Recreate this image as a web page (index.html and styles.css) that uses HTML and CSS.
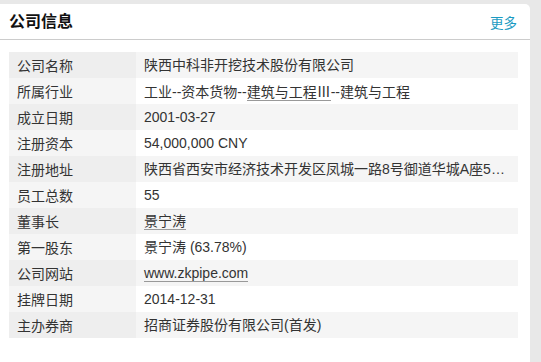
FILE: index.html
```html
<!DOCTYPE html>
<html lang="zh-CN">
<head>
<meta charset="utf-8">
<title>公司信息</title>
<link rel="stylesheet" href="styles.css">
</head>
<body>
<section class="card">
  <header class="card-head">
    <h2 class="card-title">公司信息</h2>
    <a class="more" href="#">更多</a>
  </header>
  <div class="info">
    <div class="row"><div class="label">公司名称</div><div class="value">陕西中科非开挖技术股份有限公司</div></div>
    <div class="row"><div class="label">所属行业</div><div class="value">工业--资本货物--<span class="link">建筑与工程<span class="cjk">Ⅲ</span></span>--建筑与工程</div></div>
    <div class="row"><div class="label">成立日期</div><div class="value">2001-03-27</div></div>
    <div class="row"><div class="label">注册资本</div><div class="value">54,000,000 CNY</div></div>
    <div class="row"><div class="label">注册地址</div><div class="value">陕西省西安市经济技术开发区凤城一路8号御道华城A座5层501室</div></div>
    <div class="row"><div class="label">员工总数</div><div class="value">55</div></div>
    <div class="row"><div class="label">董事长</div><div class="value"><span class="link">景宁涛</span></div></div>
    <div class="row"><div class="label">第一股东</div><div class="value">景宁涛 (63.78%)</div></div>
    <div class="row"><div class="label">公司网站</div><div class="value"><span class="link">www.zkpipe.com</span></div></div>
    <div class="row"><div class="label">挂牌日期</div><div class="value">2014-12-31</div></div>
    <div class="row"><div class="label">主办券商</div><div class="value">招商证券股份有限公司(首发)</div></div>
  </div>
</section>
</body>
</html>
```

FILE: styles.css
```css
html, body {
  margin: 0;
  padding: 0;
}
body {
  background: #e8e8e8;
  padding-top: 4px;
  font-family: "Liberation Sans", Arial, "Noto Sans CJK SC", sans-serif;
  font-size: 14px;
  color: #333;
  overflow: hidden;
}
.card {
  width: 530px;
  min-height: 400px;
  background: #fff;
  border-top-right-radius: 5px;
  box-sizing: border-box;
}
.card-head {
  height: 35px;
  display: flex;
  align-items: center;
  justify-content: space-between;
  padding: 0 13px 0 9px;
  border-bottom: 1px solid #cccccc;
}
.card-title {
  margin: 0;
  font-size: 16px;
  font-weight: bold;
  color: #111;
  line-height: 20px;
  padding-top: 1px;
}
.more {
  color: #1b9bc2;
  text-decoration: none;
  font-size: 13.5px;
  padding-top: 1px;
}
.info {
  margin: 12px 12px 0 9px;
}
.row {
  display: grid;
  grid-template-columns: 127px 1fr;
  height: 26px;
  background: #fff;
}
.row:nth-child(odd) {
  background: #f5f5f5;
}
.label, .value {
  display: flex;
  align-items: center;
  padding: 0 8px;
  white-space: nowrap;
  overflow: hidden;
  min-width: 0;
}
.label {
  background: #f5f5f5;
}
.row:nth-child(odd) .label {
  background: #eeeeee;
}
.value {
  display: block;
  line-height: 26px;
  text-overflow: ellipsis;
  padding-right: 6px;
}
.link {
  border-bottom: 1px solid #999;
}
.cjk {
  font-family: "Noto Sans CJK SC", sans-serif;
}
```
